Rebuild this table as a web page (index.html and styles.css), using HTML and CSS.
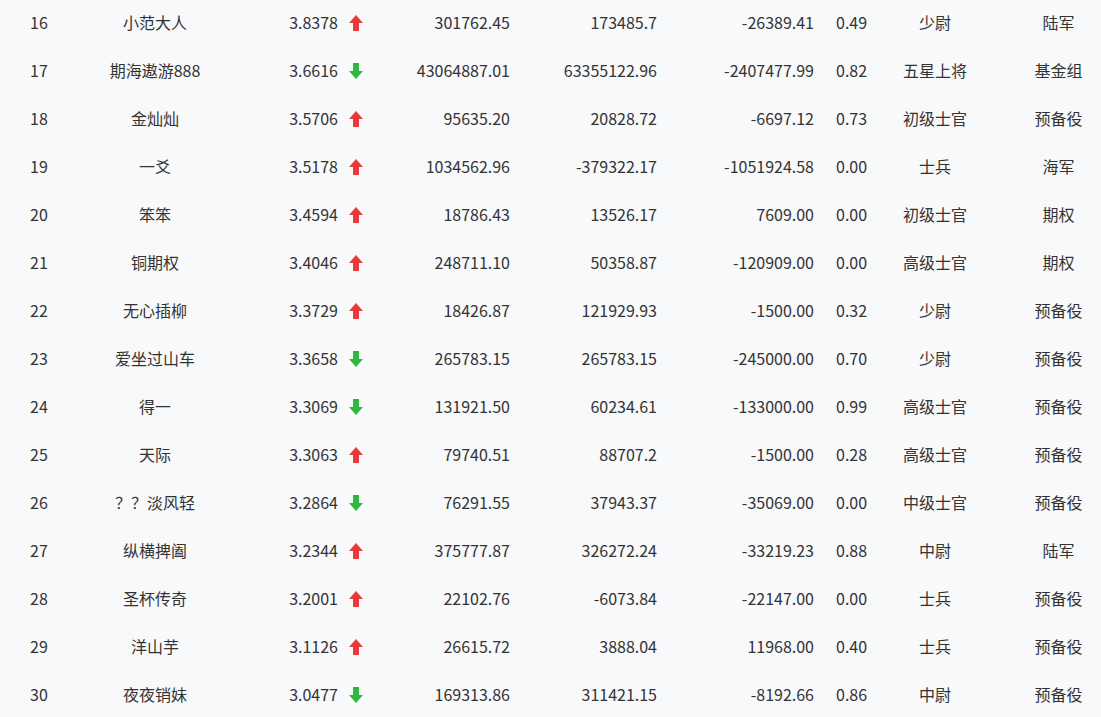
FILE: index.html
```html
<!DOCTYPE html>
<html lang="zh-CN">
<head>
<meta charset="utf-8">
<title>排行榜</title>
<link rel="stylesheet" href="styles.css">
</head>
<body>
<table class="rank-table">
  <colgroup>
    <col class="c-rank"><col class="c-name"><col class="c-score"><col class="c-a"><col class="c-b"><col class="c-c"><col class="c-d"><col class="c-title"><col class="c-group">
  </colgroup>
  <tbody>
    <tr><td class="rank">16</td><td class="name">小范大人</td><td class="score">3.8378<svg class="arrow up" viewBox="0 0 14 16"><polygon points="7,0 14,8 10,8 10,16 4,16 4,8 0,8"/></svg></td><td class="num">301762.45</td><td class="num">173485.7</td><td class="num">-26389.41</td><td class="ratio">0.49</td><td class="title">少尉</td><td class="group">陆军</td></tr>
    <tr><td class="rank">17</td><td class="name">期海遨游888</td><td class="score">3.6616<svg class="arrow down" viewBox="0 0 14 16"><polygon points="7,16 14,8 10,8 10,0 4,0 4,8 0,8"/></svg></td><td class="num">43064887.01</td><td class="num">63355122.96</td><td class="num">-2407477.99</td><td class="ratio">0.82</td><td class="title">五星上将</td><td class="group">基金组</td></tr>
    <tr><td class="rank">18</td><td class="name">金灿灿</td><td class="score">3.5706<svg class="arrow up" viewBox="0 0 14 16"><polygon points="7,0 14,8 10,8 10,16 4,16 4,8 0,8"/></svg></td><td class="num">95635.20</td><td class="num">20828.72</td><td class="num">-6697.12</td><td class="ratio">0.73</td><td class="title">初级士官</td><td class="group">预备役</td></tr>
    <tr><td class="rank">19</td><td class="name">一爻</td><td class="score">3.5178<svg class="arrow up" viewBox="0 0 14 16"><polygon points="7,0 14,8 10,8 10,16 4,16 4,8 0,8"/></svg></td><td class="num">1034562.96</td><td class="num">-379322.17</td><td class="num">-1051924.58</td><td class="ratio">0.00</td><td class="title">士兵</td><td class="group">海军</td></tr>
    <tr><td class="rank">20</td><td class="name">笨笨</td><td class="score">3.4594<svg class="arrow up" viewBox="0 0 14 16"><polygon points="7,0 14,8 10,8 10,16 4,16 4,8 0,8"/></svg></td><td class="num">18786.43</td><td class="num">13526.17</td><td class="num">7609.00</td><td class="ratio">0.00</td><td class="title">初级士官</td><td class="group">期权</td></tr>
    <tr><td class="rank">21</td><td class="name">铜期权</td><td class="score">3.4046<svg class="arrow up" viewBox="0 0 14 16"><polygon points="7,0 14,8 10,8 10,16 4,16 4,8 0,8"/></svg></td><td class="num">248711.10</td><td class="num">50358.87</td><td class="num">-120909.00</td><td class="ratio">0.00</td><td class="title">高级士官</td><td class="group">期权</td></tr>
    <tr><td class="rank">22</td><td class="name">无心插柳</td><td class="score">3.3729<svg class="arrow up" viewBox="0 0 14 16"><polygon points="7,0 14,8 10,8 10,16 4,16 4,8 0,8"/></svg></td><td class="num">18426.87</td><td class="num">121929.93</td><td class="num">-1500.00</td><td class="ratio">0.32</td><td class="title">少尉</td><td class="group">预备役</td></tr>
    <tr><td class="rank">23</td><td class="name">爱坐过山车</td><td class="score">3.3658<svg class="arrow down" viewBox="0 0 14 16"><polygon points="7,16 14,8 10,8 10,0 4,0 4,8 0,8"/></svg></td><td class="num">265783.15</td><td class="num">265783.15</td><td class="num">-245000.00</td><td class="ratio">0.70</td><td class="title">少尉</td><td class="group">预备役</td></tr>
    <tr><td class="rank">24</td><td class="name">得一</td><td class="score">3.3069<svg class="arrow down" viewBox="0 0 14 16"><polygon points="7,16 14,8 10,8 10,0 4,0 4,8 0,8"/></svg></td><td class="num">131921.50</td><td class="num">60234.61</td><td class="num">-133000.00</td><td class="ratio">0.99</td><td class="title">高级士官</td><td class="group">预备役</td></tr>
    <tr><td class="rank">25</td><td class="name">天际</td><td class="score">3.3063<svg class="arrow up" viewBox="0 0 14 16"><polygon points="7,0 14,8 10,8 10,16 4,16 4,8 0,8"/></svg></td><td class="num">79740.51</td><td class="num">88707.2</td><td class="num">-1500.00</td><td class="ratio">0.28</td><td class="title">高级士官</td><td class="group">预备役</td></tr>
    <tr><td class="rank">26</td><td class="name">？？淡风轻</td><td class="score">3.2864<svg class="arrow down" viewBox="0 0 14 16"><polygon points="7,16 14,8 10,8 10,0 4,0 4,8 0,8"/></svg></td><td class="num">76291.55</td><td class="num">37943.37</td><td class="num">-35069.00</td><td class="ratio">0.00</td><td class="title">中级士官</td><td class="group">预备役</td></tr>
    <tr><td class="rank">27</td><td class="name">纵横捭阖</td><td class="score">3.2344<svg class="arrow up" viewBox="0 0 14 16"><polygon points="7,0 14,8 10,8 10,16 4,16 4,8 0,8"/></svg></td><td class="num">375777.87</td><td class="num">326272.24</td><td class="num">-33219.23</td><td class="ratio">0.88</td><td class="title">中尉</td><td class="group">陆军</td></tr>
    <tr><td class="rank">28</td><td class="name">圣杯传奇</td><td class="score">3.2001<svg class="arrow up" viewBox="0 0 14 16"><polygon points="7,0 14,8 10,8 10,16 4,16 4,8 0,8"/></svg></td><td class="num">22102.76</td><td class="num">-6073.84</td><td class="num">-22147.00</td><td class="ratio">0.00</td><td class="title">士兵</td><td class="group">预备役</td></tr>
    <tr><td class="rank">29</td><td class="name">洋山芋</td><td class="score">3.1126<svg class="arrow up" viewBox="0 0 14 16"><polygon points="7,0 14,8 10,8 10,16 4,16 4,8 0,8"/></svg></td><td class="num">26615.72</td><td class="num">3888.04</td><td class="num">11968.00</td><td class="ratio">0.40</td><td class="title">士兵</td><td class="group">预备役</td></tr>
    <tr><td class="rank">30</td><td class="name">夜夜销妹</td><td class="score">3.0477<svg class="arrow down" viewBox="0 0 14 16"><polygon points="7,16 14,8 10,8 10,0 4,0 4,8 0,8"/></svg></td><td class="num">169313.86</td><td class="num">311421.15</td><td class="num">-8192.66</td><td class="ratio">0.86</td><td class="title">中尉</td><td class="group">预备役</td></tr>
  </tbody>
</table>
</body>
</html>
```

FILE: styles.css
```css
html, body {
  margin: 0;
  padding: 0;
  background: #f8f9fb;
}
body {
  font-family: "Noto Sans CJK SC", "Noto Sans", sans-serif;
  font-size: 16px;
  color: #333333;
  overflow: hidden;
}
.rank-table {
  border-collapse: collapse;
  table-layout: fixed;
  width: 1101px;
  margin-top: -2px;
}
.c-rank { width: 78px; }
.c-name { width: 154px; }
.c-score { width: 148px; }
.c-a { width: 140px; }
.c-b { width: 147px; }
.c-c { width: 157px; }
.c-d { width: 60px; }
.c-title { width: 102px; }
.c-group { width: 115px; }
.rank-table td {
  height: 48px;
  padding: 0;
  white-space: nowrap;
  vertical-align: middle;
  line-height: 20px;
}
.rank, .name, .title { text-align: center; }
.rank-table td.group { text-align: center; padding-left: 30px; }
.rank-table td.score { text-align: right; padding-right: 17px; }
.rank-table td.num { text-align: right; padding-right: 10px; }
.rank-table td.ratio { text-align: left; padding-left: 12px; }
.arrow {
  width: 14px;
  height: 16px;
  margin-left: 11px;
  vertical-align: -2px;
}
.arrow.up { fill: #ea3b3b; }
.arrow.down { fill: #2eb83f; }
```
